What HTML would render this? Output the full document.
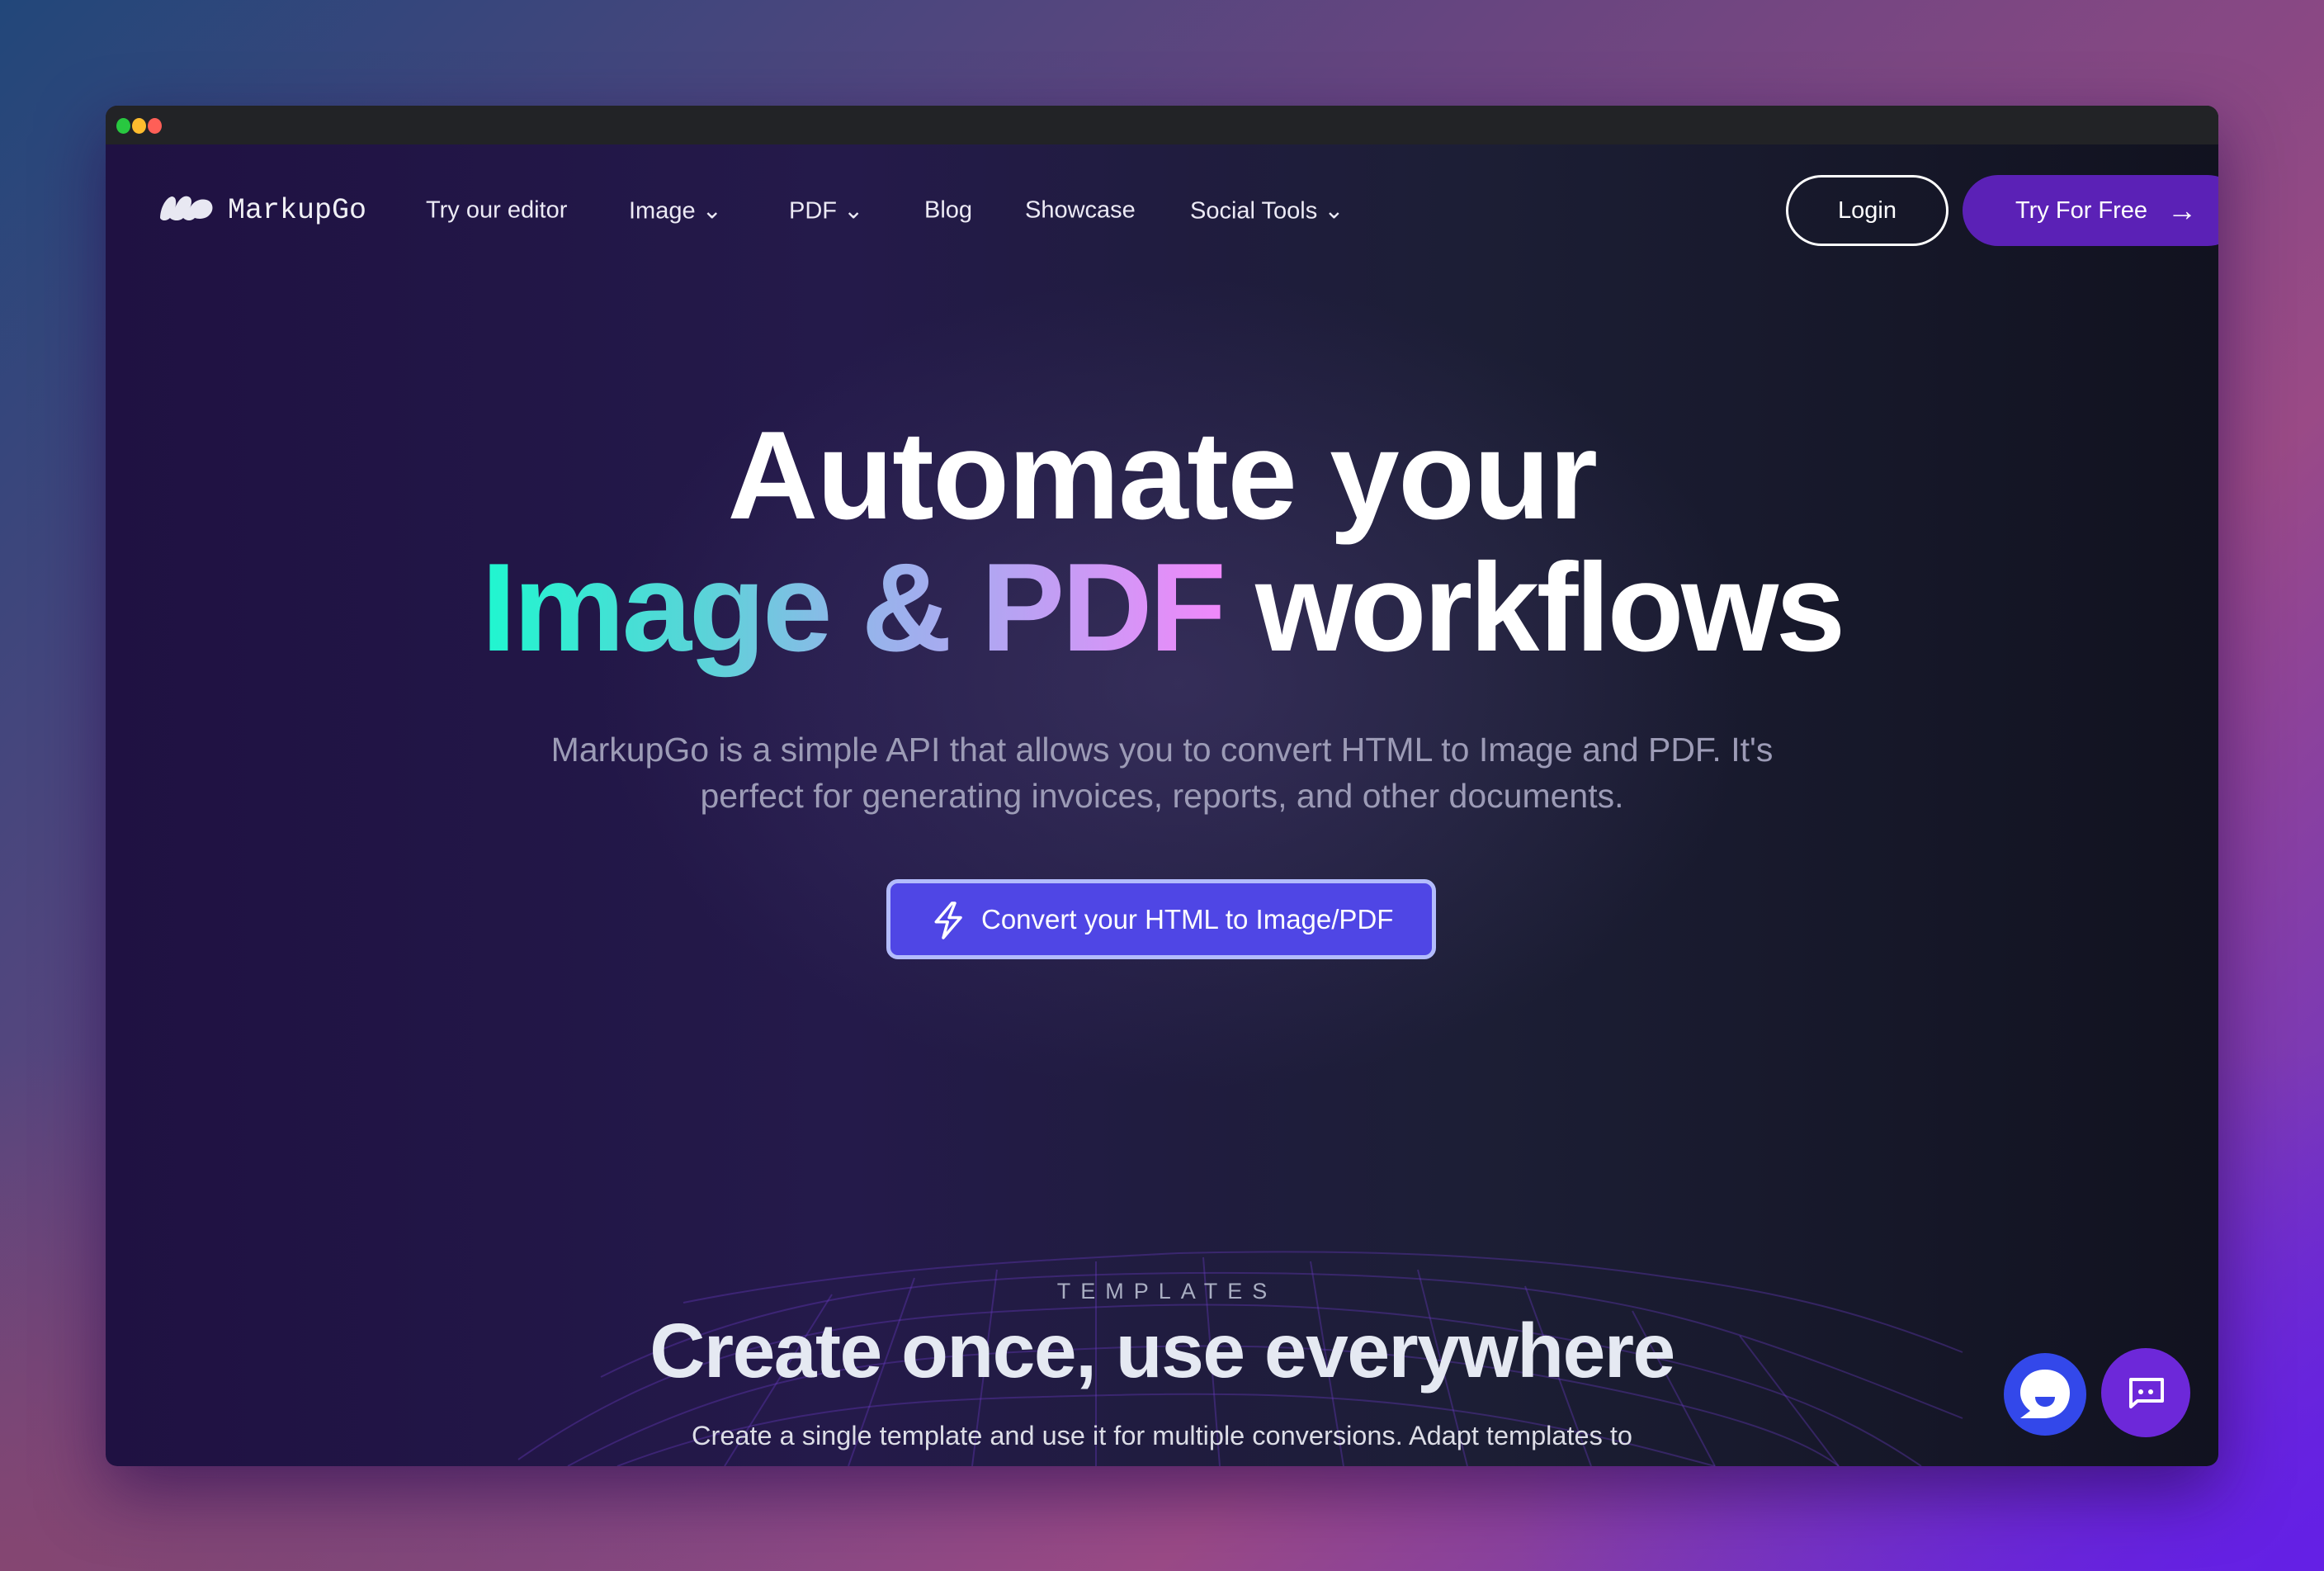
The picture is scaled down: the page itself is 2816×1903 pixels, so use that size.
<!DOCTYPE html>
<html><head><meta charset="utf-8"><style>
*{margin:0;padding:0;box-sizing:border-box}
body{width:2816px;height:1903px;overflow:hidden;position:relative;font-family:"Liberation Sans",sans-serif;
background:linear-gradient(135deg,#22477a 0%,#6a4580 40%,#9a4a86 70%,#7a38b8 88%,#6420e0 100%);}
.bg2{position:absolute;inset:0;background:radial-gradient(ellipse 1400px 900px at 0% 100%,rgba(140,70,110,.8),transparent 70%),radial-gradient(ellipse 1400px 900px at 100% 100%,rgba(100,32,230,.9),transparent 70%)}
.win{position:absolute;left:128px;top:128px;width:2560px;height:1648px;border-radius:14px;overflow:hidden;
background:radial-gradient(ellipse 1000px 700px at 1300px 700px,rgba(70,60,110,.55),transparent 70%),linear-gradient(90deg,#1f1142 0%,#241a4a 35%,#1c1e35 65%,#11121f 100%);box-shadow:0 30px 80px rgba(40,10,80,.6)}
.bar{height:47px;background:#222326;position:relative}
.dot{position:absolute;top:15px;width:17px;height:19px;border-radius:50%}
.nav{position:absolute;top:127px;transform:translateY(-50%);color:#eceaf5;font-size:29px;white-space:nowrap}
.t{position:absolute;left:0;width:2560px;text-align:center;white-space:nowrap}
.h1{font-weight:bold;font-size:152px;letter-spacing:-1.5px;color:#fff;line-height:1}
.grad{background:linear-gradient(90deg,#1ff7cf 0%,#5ad3d8 30%,#92b6ea 50%,#b0a6f2 68%,#f088fa 100%);-webkit-background-clip:text;background-clip:text;color:transparent}
</style></head><body><div class="bg2"></div>
<div class="win">
<div class="bar"><div class="dot" style="left:13px;background:#28c840"></div><div class="dot" style="left:32px;background:#febc2e"></div><div class="dot" style="left:51px;background:#ff5f57"></div></div>
<svg style="position:absolute;left:64px;top:106px" width="68" height="34" viewBox="0 0 68 34"><path d="M2 30 C2 20 8 6 16 4 C22 4 22 12 20 18 C24 8 30 2 36 4 C42 6 40 14 38 18 C42 10 50 6 58 8 C66 10 68 20 62 26 C58 31 50 32 44 30 C40 34 34 34 30 30 C26 34 18 34 14 30 C10 34 4 34 2 30Z" fill="#e8e8f2"/></svg>
<div class="nav" style="left:148px;font-family:'Liberation Mono',monospace;font-size:35px;color:#f0f0f5">MarkupGo</div>
<div class="nav" style="left:388px">Try our editor</div>
<div class="nav" style="left:634px">Image ⌄</div>
<div class="nav" style="left:828px">PDF ⌄</div>
<div class="nav" style="left:992px">Blog</div>
<div class="nav" style="left:1114px">Showcase</div>
<div class="nav" style="left:1314px">Social Tools ⌄</div>
<div style="position:absolute;left:2036px;top:84px;width:197px;height:86px;border:3px solid #fff;border-radius:45px;color:#fff;font-size:29px;display:flex;align-items:center;justify-content:center">Login</div>
<div style="position:absolute;left:2250px;top:84px;width:340px;height:86px;background:#5b21b6;border-radius:45px;color:#fff;font-size:29px;display:flex;align-items:center;padding-left:64px;white-space:nowrap">Try For Free <span style="margin-left:24px;font-size:36px">→</span></div>
<div class="t h1" style="top:372px">Automate your</div>
<div class="t h1" style="top:532px;letter-spacing:-3.5px"><span class="grad">Image &amp; PDF</span> workflows</div>
<div class="t" style="top:752px;font-size:41px;line-height:56px;color:#9c9bb6">MarkupGo is a simple API that allows you to convert HTML to Image and PDF. It's<br>perfect for generating invoices, reports, and other documents.</div>
<div style="position:absolute;left:946px;top:937px;width:666px;height:97px;background:#4f46e5;border:5px solid #b3bcfc;border-radius:14px;color:#fff;font-size:33px;display:flex;align-items:center;padding-left:110px;white-space:nowrap">Convert your HTML to Image/PDF
<svg style="position:absolute;left:50px;top:22px" width="42" height="46" viewBox="0 0 24 26"><path d="M14 1 L3 14 H11 L8 25 L20 11 H12 L16 1Z" fill="none" stroke="#fff" stroke-width="2" stroke-linejoin="round"/></svg></div>
<svg style="position:absolute;left:0;top:1380px" width="2560" height="268" viewBox="0 0 2560 268" fill="none" stroke="rgba(110,60,200,.35)" stroke-width="2">
<path d="M500 260 C700 120 900 90 1100 80 C1300 70 1500 60 1800 120 C2000 160 2100 200 2200 268"/>
<path d="M560 268 C760 160 920 140 1100 130 C1300 120 1500 110 1800 170 C1950 200 2050 230 2100 268"/>
<path d="M620 268 C800 200 950 190 1100 185 C1300 180 1500 170 1750 220 C1850 240 1900 255 1950 268"/>
<path d="M700 70 C900 30 1100 20 1300 10 C1500 5 1700 10 1900 40 C2050 60 2150 90 2250 130"/>
<path d="M600 160 C800 60 1000 40 1250 35 C1500 30 1750 40 1950 100 C2050 130 2150 170 2250 210"/>
<path d="M900 268 L980 40 M1050 268 L1080 30 M1200 268 L1200 20 M1350 268 L1330 15 M1500 268 L1460 20 M1650 268 L1590 30 M1800 268 L1720 50 M1950 268 L1850 80 M750 268 L880 60 M2100 268 L1980 110"/>
</svg>
<div class="t" style="top:1423px;font-size:27px;line-height:1;letter-spacing:12px;color:#a9aec2;padding-left:12px">TEMPLATES</div>
<div class="t" style="top:1462px;font-size:93px;line-height:1;font-weight:bold;letter-spacing:-1.5px;color:#e5e9f2">Create once, use everywhere</div>
<div class="t" style="top:1595px;font-size:32.5px;line-height:1;color:#dcdde6">Create a single template and use it for multiple conversions. Adapt templates to</div>
</div>
<div style="position:absolute;left:2428px;top:1639px;width:100px;height:100px;border-radius:50%;background:#3348ea">
<svg width="100" height="100" viewBox="0 0 100 100"><path d="M50 20 C68 20 80 32 80 48 C80 66 68 79 48 79 H20 L32 70 C24 64 20 56 20 48 C20 32 32 20 50 20Z" fill="#fff"/><path d="M38 53 H62 C62 60 57 65 50 65 C43 65 38 60 38 53Z" fill="#3348ea"/></svg></div>
<div style="position:absolute;left:2546px;top:1633px;width:108px;height:108px;border-radius:50%;background:#6d28d9">
<svg width="108" height="108" viewBox="0 0 108 108"><path d="M36 38 H74 V64 H44 L36 71Z" fill="none" stroke="#fff" stroke-width="4" stroke-linejoin="round"/><circle cx="48" cy="53" r="3" fill="#fff"/><circle cx="60" cy="53" r="3" fill="#fff"/></svg></div>
</body></html>
